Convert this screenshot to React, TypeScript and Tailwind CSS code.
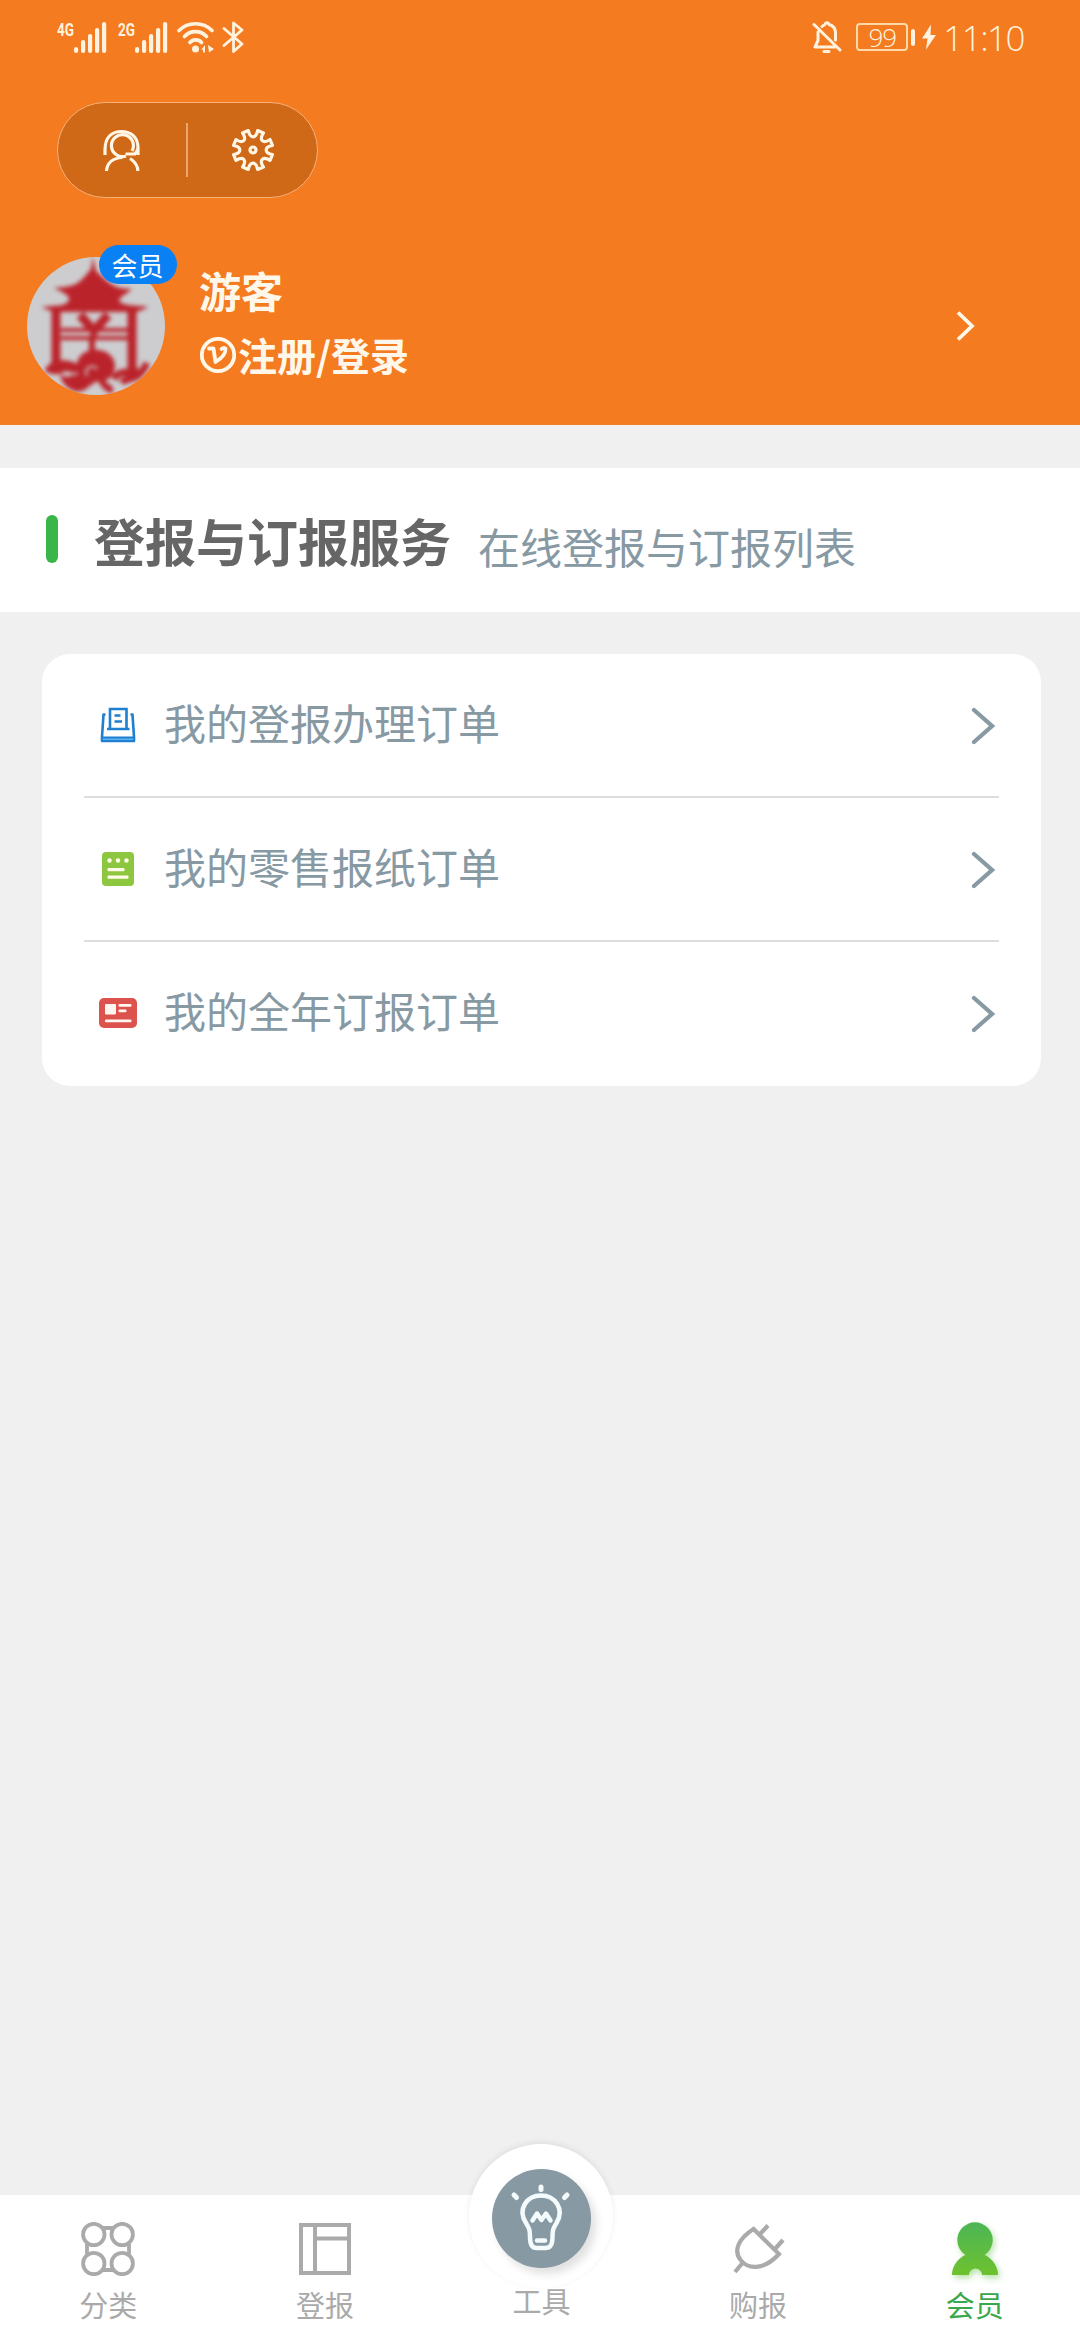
import type { ReactNode } from 'react'

function point(r: number, deg: number) {
  const a = (deg * Math.PI) / 180
  return `${(22 + r * Math.cos(a)).toFixed(2)} ${(22 + r * Math.sin(a)).toFixed(2)}`
}

// eight teeth, with a rounded valley between each pair
const GEAR_PATH =
  `M${point(20, 13.5)}` +
  [0, 1, 2, 3, 4, 5, 6, 7]
    .map((i) => {
      const a = i * 45 + 22.5
      return `L${point(20, a + 9)}C${point(11.5, a + 7)} ${point(11.5, a + 38)} ${point(20, a + 36)}`
    })
    .join('') +
  'Z'

function Signal({ label }: { label: string }) {
  return (
    <svg className="h-10 w-[50px]" viewBox="0 -4 50 40" fill="#fff3df">
      <text x="0" y="15" fontSize="19" fontWeight="700" fontFamily="Roboto, sans-serif" textLength="17" lengthAdjust="spacingAndGlyphs">
        {label}
      </text>
      <rect x="17" y="26" width="4.2" height="6" rx="2" />
      <rect x="24" y="19" width="4.2" height="13" rx="2" />
      <rect x="31" y="13" width="4.2" height="19" rx="2" />
      <rect x="38" y="7" width="4.2" height="25" rx="2" />
      <rect x="45" y="1" width="4.2" height="31" rx="2" />
    </svg>
  )
}

function StatusBar() {
  return (
    <div className="flex h-[74px] items-center justify-between pl-[57px] pr-[56px] text-[#fff3df]">
      <div className="flex items-center">
        <Signal label="4G" />
        <span className="w-[11px]" />
        <Signal label="2G" />
        <svg className="ml-2 h-8 w-[38px]" viewBox="0 0 38 32" fill="none" stroke="currentColor" strokeWidth="3.6" strokeLinecap="round">
          <path d="M3 9.5C12 .5 27 .5 36 9.5M8.500 15.500C14.500 9 24.500 9 30.500 15.500M14 21.500C17 18 22.500 18 25.500 21.500" />
          <circle cx="19.500" cy="28" r="3.500" fill="currentColor" stroke="none" />
          <path d="M25 29l4-5v7.500h-2v-3zM32 24l6 4-5 3.500z" fill="currentColor" stroke="none" />
        </svg>
        <svg className="ml-2 h-8 w-[22px]" viewBox="0 0 22 32" fill="none" stroke="currentColor" strokeWidth="2.800" strokeLinejoin="round" strokeLinecap="round">
          <path d="M2 7.500l18 15.500-8.500 7.500V2l8.500 7-18 15.500" />
        </svg>
      </div>
      <div className="flex items-center">
        <svg className="h-8 w-[30px]" viewBox="0 0 30 32" fill="none" stroke="currentColor" strokeWidth="3" strokeLinecap="round" strokeLinejoin="round">
          <path d="M2 3.500l26 25.500M10 5.500C11 4.500 12 4 13 3.500c.5-2.300 3.500-2.300 4 0 4 1 6.500 4.500 6.500 9V19M6 11v8.500L3 26h20" />
          <path d="M12 30.500h5" />
        </svg>
        <div className="ml-[14px] flex h-[28px] w-[52px] items-center justify-center rounded-[4px] border-2 border-[#ffd9a8] font-['Open_Sans',sans-serif] text-[26px] font-light leading-none tracking-[-1px]">
          99
        </div>
        <span className="ml-[3px] h-[17px] w-1 rounded-full bg-current" />
        <svg className="ml-[7px] h-[26px] w-[14px]" viewBox="0 0 14 25" fill="currentColor">
          <path d="M9 0L0 14h5.500L4 25l10-14.500H8.500z" />
        </svg>
        <span className="ml-[7px] font-['Open_Sans',sans-serif] text-[35px] font-light leading-none tracking-[-1.500px]">11:10</span>
      </div>
    </div>
  )
}

function QuickActions() {
  return (
    <div className="ml-[57px] mt-[28px] flex h-[96px] w-[261px] items-center rounded-full border border-[#f8b27c] bg-[#cf6817] text-[#fff6e6]">
      <button type="button" className="flex w-32 justify-center">
        <svg className="h-11 w-[42px]" viewBox="0 0 42 44" fill="none" stroke="currentColor" strokeWidth="3.200">
          <path d="M4 27v-5C4 9 11 3.500 20.500 3.500S37 9 37 20v7" />
          <path d="M25 28A11 11 0 1 1 31 23" />
          <path d="M37 21l-3 5H24.500M5.500 43c.5-7 5-13 16-13.500M29 30.500c4 2.500 7.500 6.500 8 12.500" />
        </svg>
      </button>
      <span className="h-[54px] w-[2px] bg-[#e9a66d]" />
      <button type="button" className="flex flex-1 justify-center">
        <svg className="h-11 w-11" viewBox="0 0 44 44" fill="none" stroke="currentColor" strokeWidth="3.200" strokeLinejoin="round">
          <path d={GEAR_PATH} />
          <circle cx="22" cy="22" r="3" />
        </svg>
      </button>
    </div>
  )
}

function Avatar() {
  return (
    <svg className="h-[138px] w-[138px] rounded-full" viewBox="0 0 138 138">
      <rect width="138" height="138" fill="#cdcdcf" />
      <g fill="#bb232b" stroke="#bb232b" style={{ filter: 'blur(1.900px)' }}>
        <path stroke="none" d="M66 0l3 14c7 6 10 10 17 14 5 3 12 4 19 4-5 5-12 7-13 12 4 5 15 4 29 6-4 3-8 3-11 5H27c-3-2-8-2-12-5 14-2 24 0 27-7 1-5-7-8-15-12 12-1 21-2 26-7 6-5 9-10 11-12z" />
        <path fill="none" strokeWidth="9" d="M29 52v60M105 52v66" />
        <path fill="none" strokeWidth="4" d="M34 73h67M34 81h67" />
        <path fill="none" strokeWidth="9" d="M53 58l14 16 14-16" />
        <path fill="none" strokeWidth="6" d="M65 78v20" />
        <path stroke="none" d="M50 107c2-19 36-19 38 1 0 8-4 13-10 16 4 5 9 2 8 12-6 1-12-6-15-12-10 4-13 13-24 10-8-3-13-10-14-16 6 2 10 3 12-1-8-3-17 4-27-3 2-11 21-14 32-7z" />
        <path fill="none" strokeWidth="7" d="M87 122c7-12 17-3 25-9M95 126c6-9 14 3 25-20" />
        <path fill="none" stroke="#cdcdcf" strokeWidth="2" d="M60 119c-4-7 5-13 10-7M36 116c6-3 9 4 15 0" />
      </g>
    </svg>
  )
}

function Header() {
  return (
    <header className="h-[425px] bg-[#f47b1f]">
      <StatusBar />
      <QuickActions />
      <div className="mt-[59px] flex h-[138px] items-center pl-[27px]">
        <div className="relative">
          <Avatar />
          <span className="absolute -top-3 left-[72px] flex h-[39px] w-[78px] items-center justify-center rounded-full bg-[#0a80f5] pr-px text-[26px] leading-none text-white">
            会员
          </span>
        </div>
        <div className="mb-2 ml-[34px] flex flex-col text-[#fff8ea]">
          <p className="text-[42px] font-bold leading-[64px]">游客</p>
          <p className="flex items-center text-[39px] font-bold leading-[64px]">
            <svg className="mr-px mt-px h-[38px] w-[38px]" viewBox="0 0 38 38" fill="none" stroke="currentColor" strokeWidth="3.800">
              <circle cx="19" cy="19" r="16.200" />
              <path d="M10 12.500h4.500L16.500 26C23 22 27 17 26.500 12.500c-1.500-1-3-.5-4 .5" strokeLinecap="round" strokeLinejoin="round" />
            </svg>
            注册/登录
          </p>
        </div>
        <svg className="mb-px ml-auto mr-[105px] h-[30px] w-5" viewBox="0 0 20 30" fill="none" stroke="#fff8ea" strokeWidth="3.800">
          <path d="M3 1.500l14 13.500L3 28.500" />
        </svg>
      </div>
    </header>
  )
}

const ORDERS: { label: string; icon: ReactNode }[] = [
  {
    label: '我的登报办理订单',
    icon: (
      <svg className="h-9 w-9" viewBox="0 0 36 36" fill="none" stroke="#1f7fd0" strokeWidth="2.600">
        <path d="M5.500 7.500H3.500L2 30v4h32v-4L32.500 7.500h-2" strokeLinejoin="round" />
        <path d="M2 30.500h32v3.500H2z" fill="#5db5f5" strokeWidth="1.800" />
        <path d="M10 21V2h16.500v19M7 22h22.500M14.500 8.500h6M14.500 14.500h7.500" />
      </svg>
    ),
  },
  {
    label: '我的零售报纸订单',
    icon: (
      <svg className="h-9 w-9" viewBox="0 0 36 36">
        <rect x="2" y="1" width="32" height="34" rx="4" fill="#8dc63f" />
        <g fill="#fffbe8">
          <circle cx="9.500" cy="9.500" r="2.200" />
          <circle cx="18" cy="9.500" r="2.200" />
          <circle cx="26.500" cy="9.500" r="2.200" />
          <rect x="7.500" y="17" width="17" height="3.200" rx="1" />
          <rect x="7.500" y="24.500" width="21" height="3.200" rx="1" />
        </g>
      </svg>
    ),
  },
  {
    label: '我的全年订报订单',
    icon: (
      <svg className="h-9 w-[38px]" viewBox="0 0 38 36">
        <rect x="0" y="3" width="38" height="30" rx="5" fill="#dc524c" />
        <g fill="#fff6f2">
          <rect x="6" y="9" width="11" height="10.500" rx="1" />
          <rect x="19.500" y="9" width="13" height="2.800" rx="1" />
          <rect x="19.500" y="14.500" width="8" height="2.800" rx="1" />
          <rect x="6" y="24.500" width="26.500" height="2.800" rx="1" />
        </g>
      </svg>
    ),
  },
]

function OrderRow({ label, icon }: { label: string; icon: ReactNode }) {
  return (
    <li className="flex h-36 items-center border-b-2 border-[#dddddd] pb-px pr-1 last:border-b-0 last:pb-[3px]">
      <span className="flex w-[67px] justify-center">{icon}</span>
      <span className="mb-[6px] ml-[13px] text-[42px] leading-none text-[#8799a3]">{label}</span>
      <svg className="ml-auto mt-[3px] h-10 w-6" viewBox="0 0 24 40" fill="none" stroke="#8799a3" strokeWidth="4.200" strokeLinecap="round">
        <path d="M3 4l18 16L3 36" />
      </svg>
    </li>
  )
}

const TABS: { label: string; icon: ReactNode; active?: boolean; center?: boolean }[] = [
  {
    label: '分类',
    icon: (
      <svg className="h-[54px] w-[54px]" viewBox="0 0 54 54" fill="none" stroke="#aaaaaa" strokeWidth="3.800">
        <path d="M21 6h12M21 48h12M6 22v10M48 22v10" />
        <circle cx="12.800" cy="12.500" r="10.700" />
        <circle cx="41.200" cy="12.500" r="10.700" />
        <circle cx="12.800" cy="41.500" r="10.700" />
        <circle cx="41.200" cy="41.500" r="10.700" />
      </svg>
    ),
  },
  {
    label: '登报',
    icon: (
      <svg className="h-[54px] w-[54px]" viewBox="0 0 54 54" fill="none" stroke="#aaaaaa" strokeWidth="4">
        <rect x="3" y="3" width="48" height="48" />
        <path d="M17 3v48M17 16.500h34" />
      </svg>
    ),
  },
  {
    label: '工具',
    center: true,
    icon: (
      <svg className="h-[70px] w-[62px]" viewBox="0 0 62 70" fill="none" stroke="#f4fbfc" strokeWidth="4.500" strokeLinecap="round" strokeLinejoin="round">
        <path d="M31 4v2.500M4 12l2.500 2.500M57 12l-2.500 2.500" strokeWidth="5" />
        <path d="M20 54c0-8-1-9-4-14-9-14 1-27.500 15-27.500S55 26 46.500 40c-3 5-4 6-4 14 0 8-2 11-7 11h-9c-5 0-6.500-4-6.500-11z" />
        <path d="M27 57.500h8" />
        <path d="M22.500 37.500l4.500-7 4.500 6.500 4.500-6.500 4.500 7" />
      </svg>
    ),
  },
  {
    label: '购报',
    icon: (
      <svg className="h-[54px] w-[54px]" viewBox="0 0 54 54" fill="none" stroke="#aaaaaa" strokeWidth="4.200">
        <path d="M22.500 7C7 17 2 29 10 38.500s24 9 38-6.500zM11.500 41L4 50M29 12l8-8.500M44 27l8-9" />
      </svg>
    ),
  },
  {
    label: '会员',
    active: true,
    icon: (
      <svg className="h-[54px] w-[54px] overflow-visible drop-shadow-[2px_3px_3px_rgba(90,190,60,0.450)]" viewBox="0 0 54 54" fill="url(#member)">
        <defs>
          <linearGradient id="member" x1="0" y1="0" x2="0" y2="54" gradientUnits="userSpaceOnUse">
            <stop offset="0" stopColor="#4bb556" />
            <stop offset="1" stopColor="#6fc22d" />
          </linearGradient>
        </defs>
        <circle cx="27" cy="18" r="17.700" />
        <path d="M17 33h20c8 4 13 12 13 20H34a6.500 6.500 0 0 0-13 0H4c0-8 5-16 13-20z" />
      </svg>
    ),
  },
]

function TabBar() {
  return (
    <nav className="flex h-[145px] w-[1083px] bg-white">
      {TABS.map((tab) => (
        <div key={tab.label} className="flex flex-1 flex-col items-center">
          {tab.center ? (
            <div className="relative h-[90px] w-36">
              {/* raised button that sticks out over the bar */}
              <div className="absolute -top-[51px] left-0 h-36 w-36 rounded-full bg-white shadow-[0_-2px_6px_rgba(0,0,0,0.070)]" />
              <div className="absolute -top-[51px] left-0 flex h-[148px] w-36 items-center justify-center">
                <div className="flex h-[99px] w-[99px] items-center justify-center rounded-full bg-[#8799a3] shadow-[5px_6px_8px_rgba(0,0,0,0.120)]">
                  {tab.icon}
                </div>
              </div>
            </div>
          ) : (
            <div className="mt-[27px] h-[67px]">{tab.icon}</div>
          )}
          <span className={`relative text-[29px] leading-[30px] ${tab.active ? 'text-[#39a84c]' : 'text-[#aaaaaa]'}`}>{tab.label}</span>
        </div>
      ))}
    </nav>
  )
}

export default function App() {
  return (
    <div className="flex h-[2340px] w-[1080px] flex-col overflow-hidden bg-[#f0f0f0] font-['Noto_Sans_CJK_SC',sans-serif]">
      <Header />
      <section className="mt-[43px] flex h-36 items-center bg-white pl-[46px]">
        <span className="mb-[2px] h-12 w-3 rounded-full bg-[#39b54a]" />
        <h1 className="ml-9 text-[51px] font-bold leading-none text-[#666666]">登报与订报服务</h1>
        <p className="ml-[27px] mt-3 text-[42px] leading-none text-[#8799a3]">在线登报与订报列表</p>
      </section>
      <ul className="ml-[42px] mt-[42px] w-[999px] rounded-[28px] bg-white px-[42px]">
        {ORDERS.map((order) => (
          <OrderRow key={order.label} {...order} />
        ))}
      </ul>
      <div className="flex-1" />
      <TabBar />
    </div>
  )
}
